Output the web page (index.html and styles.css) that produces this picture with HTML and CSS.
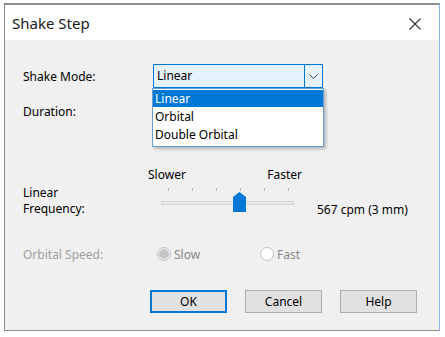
FILE: index.html
```html
<!DOCTYPE html>
<html lang="en">
<head>
    <meta charset="UTF-8">
    <title>Shake Step</title>
    <link rel="stylesheet" href="styles.css">
</head>
<body>
    <div class="dialog">
        <div class="titlebar">
            <span class="title">Shake Step</span>
            <svg class="close" width="12" height="12" viewBox="0 0 12 12">
                <path d="M0.5 0.5 L11.5 11.5 M11.5 0.5 L0.5 11.5" stroke="#333" stroke-width="1.1" fill="none"/>
            </svg>
        </div>
        <div class="content">
            <div class="row mode-row">
                <label class="label">Shake Mode:</label>
                <div class="combo">
                    <div class="combo-box">
                        <span class="combo-text">Linear</span>
                        <span class="combo-arrow">
                            <svg width="9" height="5" viewBox="0 0 9 5"><path d="M0.5 0.5 L4.5 4.5 L8.5 0.5" stroke="#444" fill="none"/></svg>
                        </span>
                    </div>
                    <ul class="combo-list">
                        <li class="selected">Linear</li>
                        <li>Orbital</li>
                        <li>Double Orbital</li>
                    </ul>
                </div>
            </div>

            <div class="row duration-row">
                <label class="label">Duration:</label>
            </div>

            <div class="row freq-row">
                <div class="label freq-label">
                    <span>Linear</span>
                    <span>Frequency:</span>
                </div>
                <div class="slider">
                    <div class="slider-caps">
                        <span>Slower</span>
                        <span>Faster</span>
                    </div>
                    <div class="ticks">
                        <i></i><i></i><i></i><i></i><i></i><i></i>
                    </div>
                    <div class="track"></div>
                    <svg class="thumb" width="13" height="20" viewBox="0 0 13 20">
                        <path d="M0 5 L6.5 0 L13 5 L13 20 L0 20 Z" fill="#0078d7"/>
                    </svg>
                </div>
                <span class="freq-value">567 cpm (3 mm)</span>
            </div>

            <div class="row speed-row">
                <label class="label disabled">Orbital Speed:</label>
                <div class="radio slow">
                    <span class="dot checked"></span>
                    <span>Slow</span>
                </div>
                <div class="radio fast">
                    <span class="dot"></span>
                    <span>Fast</span>
                </div>
            </div>

            <div class="buttons">
                <button class="default">OK</button>
                <button>Cancel</button>
                <button>Help</button>
            </div>
        </div>
    </div>
</body>
</html>
```

FILE: styles.css
```css
html, body {
    margin: 0;
    background: #ffffff;
    font-family: "Noto Sans", "Open Sans", sans-serif;
    font-size: 12px;
    color: #000000;
}
.dialog {
    margin: 3px 0 0 4px;
    width: 436px;
    height: 328px;
    border-top: 2px solid #8e8e8e;
    border-left: 1px solid #8e8e8e;
    border-bottom: 1px solid #8e8e8e;
    border-right: 1px solid #8fb6dc;
    display: flex;
    flex-direction: column;
    box-sizing: border-box;
}
.titlebar {
    height: 35px;
    background: #ffffff;
    display: flex;
    align-items: center;
    justify-content: space-between;
    padding: 0 18px 0 7px;
    flex-shrink: 0;
}
.title {
    font-size: 15px;
    color: #1a1a1a;
    margin-top: 1px;
}
.close {
    margin-top: 2px;
}
.content {
    flex: 1;
    background: #f0f0f0;
    padding: 24px 0 0 18px;
}
.row {
    display: flex;
    align-items: center;
}
.label {
    width: 130px;
    flex-shrink: 0;
}
.mode-row {
    height: 24px;
}
.combo {
    position: relative;
    width: 170px;
}
.combo-box {
    height: 24px;
    box-sizing: border-box;
    border: 1px solid #0078d7;
    background: #e5f1fb;
    display: flex;
}
.combo-text {
    flex: 1;
    padding-left: 3px;
    line-height: 22px;
}
.combo-arrow {
    width: 17px;
    border-left: 1px solid #0078d7;
    display: flex;
    align-items: center;
    justify-content: center;
}
.combo-list {
    position: absolute;
    top: 24px;
    left: -1px;
    width: 172px;
    margin: 0;
    padding: 1px 0 2px;
    list-style: none;
    background: #ffffff;
    border: 1px solid #6a9fd4;
    box-sizing: border-box;
    box-shadow: 2px 2px 3px rgba(0, 0, 0, 0.25);
    z-index: 2;
}
.combo-list li {
    height: 17px;
    line-height: 17px;
    padding-left: 2px;
    margin-bottom: 1px;
}
.combo-list li.selected {
    background: #0078d7;
    color: #ffffff;
}
.duration-row {
    margin-top: 12px;
    height: 22px;
}
.freq-row {
    margin-top: 44px;
    height: 50px;
    align-items: flex-start;
}
.freq-label {
    width: 125px;
    margin-top: 19px;
    display: flex;
    flex-direction: column;
    line-height: 17px;
    gap: 0;
}
.freq-label span {
    height: 15px;
    line-height: 15px;
    overflow: visible;
}
.freq-label span + span {
    margin-top: 1px;
}
.slider {
    position: relative;
    width: 154px;
    height: 48px;
}
.slider-caps {
    display: flex;
    justify-content: space-between;
    height: 18px;
    line-height: 18px;
}
.ticks {
    display: flex;
    gap: 23px;
    padding-left: 20px;
    margin-top: 4px;
    height: 3px;
}
.ticks i {
    width: 1px;
    height: 3px;
    background: #b4b4b4;
}
.track {
    margin: 10px 0 0 13px;
    width: 133px;
    height: 4px;
    box-sizing: border-box;
    background: #e7eaea;
    border: 1px solid #d6d6d6;
}
.thumb {
    position: absolute;
    left: 85px;
    top: 26px;
}
.freq-value {
    margin: 35px 0 0 15px;
}
.speed-row {
    margin-top: 28px;
    height: 20px;
}
.disabled {
    color: #a0a0a0;
}
.radio {
    display: flex;
    align-items: center;
    gap: 3px;
    color: #888888;
}
.slow {
    margin-left: 4px;
    width: 103px;
}
.dot {
    width: 14px;
    height: 14px;
    box-sizing: border-box;
    border-radius: 50%;
    border: 1px solid #c4c4c4;
    background: #ffffff;
}
.dot.checked {
    background: radial-gradient(circle, #c4c4c4 0 4.5px, #ececec 5px);
}
.buttons {
    display: flex;
    gap: 18px;
    margin: 26px 0 0 127px;
}
button {
    width: 77px;
    height: 23px;
    font-family: inherit;
    font-size: 12px;
    background: #e1e1e1;
    border: 1px solid #adadad;
    padding: 0;
    color: #000000;
}
button.default {
    border: 2px solid #0078d7;
}
```
